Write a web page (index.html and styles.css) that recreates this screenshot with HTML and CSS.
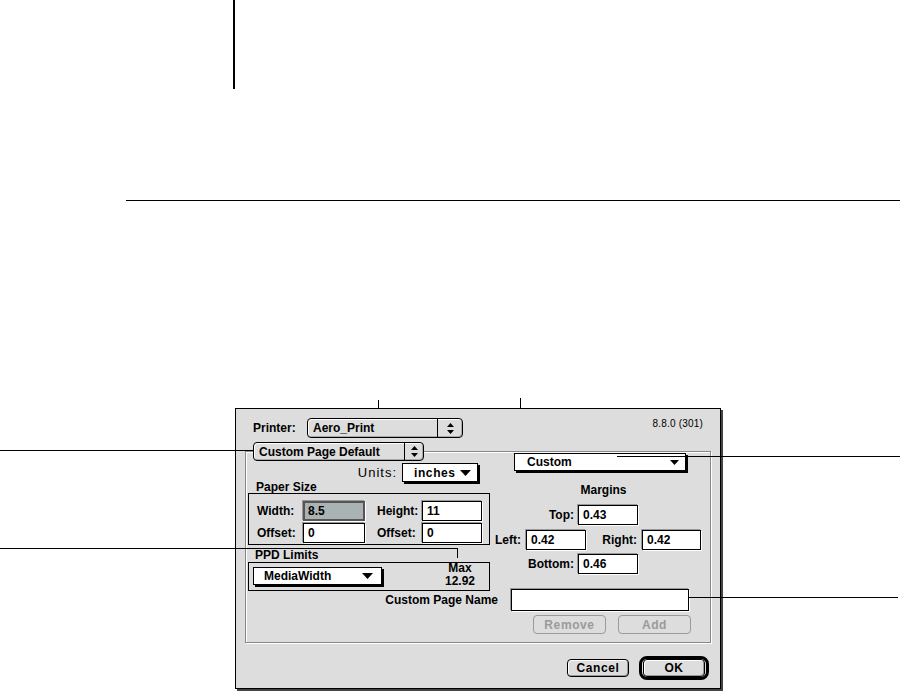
FILE: index.html
```html
<!DOCTYPE html>
<html lang="en">
<head>
  <meta charset="UTF-8" />
  <title>Custom Page Size</title>
  <link rel="stylesheet" href="styles.css">
</head>
<body>
  <div class="page">
    <div class="chapter-bar"></div>
    <div class="rule"></div>

    <div class="figure">
      <div class="dialog">
        <div class="dialog-top">
          <span class="label printer-label">Printer:</span>
          <div class="popup popup-gray printer-popup">
            <span class="popup-text">Aero_Print</span>
            <span class="popup-arrows">
              <svg width="7" height="11" viewBox="0 0 7 11"><polygon points="0,4 3.5,0 7,4" /><polygon points="0,7 7,7 3.5,11" /></svg>
            </span>
          </div>
          <span class="version">8.8.0 (301)</span>
        </div>

        <div class="group">
          <div class="popup popup-gray group-title">
            <span class="popup-text">Custom Page Default</span>
            <span class="popup-arrows">
              <svg width="7" height="11" viewBox="0 0 7 11"><polygon points="0,4 3.5,0 7,4" /><polygon points="0,7 7,7 3.5,11" /></svg>
            </span>
          </div>

          <div class="group-body">
            <div class="col-left">
              <div class="units-row">
                <span class="label-light">Units:</span>
                <div class="popup popup-white units-popup">
                  <span class="popup-text">inches</span>
                  <svg class="drop" width="11" height="6" viewBox="0 0 11 6"><polygon points="0,0 11,0 5.5,6" /></svg>
                </div>
              </div>

              <div class="box-title">Paper Size</div>
              <div class="box paper-box">
                <span class="label">Width:</span>
                <div class="field field-selected">8.5</div>
                <span class="label label-second">Height:</span>
                <div class="field">11</div>
                <span class="label">Offset:</span>
                <div class="field">0</div>
                <span class="label label-second">Offset:</span>
                <div class="field">0</div>
              </div>

              <div class="box-title ppd-title">PPD Limits</div>
              <div class="box ppd-box">
                <div class="popup popup-white media-popup">
                  <span class="popup-text">MediaWidth</span>
                  <svg class="drop" width="11" height="6" viewBox="0 0 11 6"><polygon points="0,0 11,0 5.5,6" /></svg>
                </div>
                <div class="limit">
                  <div>Max</div>
                  <div>12.92</div>
                </div>
              </div>
            </div>

            <div class="col-right">
              <div class="popup popup-white custom-popup">
                <span class="popup-text">Custom</span>
                <svg class="drop" width="9" height="5" viewBox="0 0 9 5"><polygon points="0,0 9,0 4.5,5" /></svg>
              </div>
              <div class="margins-title">Margins</div>
              <div class="margin-row margin-center">
                <span class="label margin-label">Top:</span>
                <div class="field margin-field">0.43</div>
              </div>
              <div class="margin-row margin-sides">
                <span class="label side-left">Left:</span>
                <div class="field margin-field">0.42</div>
                <span class="label side-right">Right:</span>
                <div class="field margin-field-right">0.42</div>
              </div>
              <div class="margin-row margin-center margin-last">
                <span class="label margin-label">Bottom:</span>
                <div class="field margin-field">0.46</div>
              </div>
            </div>
          </div>

          <div class="name-row">
            <span class="label">Custom Page Name</span>
            <div class="field name-field"></div>
          </div>
          <div class="btn-row">
            <button class="btn btn-disabled">Remove</button>
            <button class="btn btn-disabled">Add</button>
          </div>
        </div>

        <div class="dialog-actions">
          <button class="btn btn-cancel">Cancel</button>
          <div class="btn-ring">
            <button class="btn btn-ok">OK</button>
          </div>
        </div>
      </div>
    </div>

    <!-- leader lines pointing at the dialog items -->
    <div class="leader leader-title"></div>
    <div class="leader leader-ppd"></div>
    <div class="leader leader-ppd-drop"></div>
    <div class="leader leader-custom"></div>
    <div class="leader leader-name"></div>

    <!-- crop ticks above the figure -->
    <div class="tick tick-a"></div>
    <div class="tick tick-b"></div>
  </div>
</body>
</html>
```

FILE: styles.css
```css
:root {
  --negro: #000000;
  --platino: #dddddd;
  --gris: #888888;
  --gris-claro: #9a9a9a;
  --seleccion: #a9b3b3;
  --blanco: #ffffff;
}

body {
  margin: 0;
  background: var(--blanco);
  font-family: "Liberation Sans", Arial, sans-serif;
  color: var(--negro);
}

.page {
  position: relative;
  width: 900px;
  height: 694px;
  overflow: hidden;
}

.chapter-bar {
  width: 2px;
  height: 89px;
  margin-left: 233px;
  background: var(--negro);
}

.rule {
  height: 1px;
  margin: 111px 0 0 126px;
  background: var(--negro);
}

.figure {
  padding: 207px 0 0 235px;
}

/* dialog window */
.dialog {
  width: 484px;
  border: 1px solid var(--negro);
  background: var(--platino);
  box-shadow: 2px 2px 0 #444;
  font-size: 12px;
  font-weight: bold;
}

.dialog-top {
  display: flex;
  align-items: center;
  height: 20px;
  padding: 9px 17px 0 17px;
}

.printer-label {
  width: 54px;
}

.version {
  margin-left: auto;
  align-self: flex-start;
  margin-top: 0;
  font-size: 10px;
  font-weight: normal;
  letter-spacing: 0.2px;
}

.label {
  white-space: nowrap;
}

.label-light {
  font-size: 13px;
  font-weight: normal;
  letter-spacing: 1px;
  margin-right: 5px;
}

/* popup menus */
.popup {
  box-sizing: border-box;
  display: flex;
  align-items: center;
  border: 1px solid var(--negro);
  white-space: nowrap;
}

.popup-gray {
  height: 20px;
  border-radius: 4px;
  background: var(--platino);
  box-shadow: inset 1px 1px 0 var(--blanco), inset -1px -1px 0 #aaa;
}

.popup-gray .popup-text {
  flex: 1;
  padding-left: 5px;
}

.popup-arrows {
  display: flex;
  align-items: center;
  justify-content: center;
  align-self: stretch;
  border-left: 1px solid var(--negro);
}

.printer-popup {
  width: 156px;
}

.printer-popup .popup-arrows {
  width: 24px;
}

.group-title {
  position: absolute;
  top: -10px;
  left: 7px;
  width: 171px;
  height: 19px;
}

.group-title .popup-arrows {
  width: 18px;
}

.popup-white {
  height: 18px;
  background: var(--blanco);
  box-shadow: 2px 2px 0 var(--negro);
}

.popup-white .popup-text {
  flex: 1;
}

.drop {
  margin-right: 6px;
}

.units-popup {
  width: 76px;
  height: 19px;
  padding-left: 11px;
  letter-spacing: 0.6px;
}

.custom-popup {
  width: 172px;
  margin: 1px 0 0 22px;
  padding-left: 12px;
}

.media-popup {
  width: 129px;
  padding-left: 10px;
}

.media-popup .drop {
  margin-right: 8px;
}

/* group box */
.group {
  position: relative;
  margin: 13px 9px 0 9px;
  border: 1px solid var(--gris);
  box-shadow: 1px 1px 0 var(--blanco), inset 1px 1px 0 var(--blanco);
}

.group-body {
  display: grid;
  grid-template-columns: 246px 1fr;
}

.units-row {
  display: flex;
  align-items: center;
  justify-content: flex-end;
  margin-top: 11px;
  padding-right: 14px;
  height: 19px;
}

.box-title {
  height: 11px;
  line-height: 11px;
  padding-left: 10px;
}

.ppd-title {
  height: 13px;
  padding-top: 4px;
  line-height: 13px;
  padding-left: 9px;
}

.box {
  box-sizing: border-box;
  width: 242px;
  margin-left: 2px;
  border: 1px solid var(--negro);
}

.paper-box {
  height: 52px;
  display: grid;
  grid-template-columns: 54px 62px 57px 60px;
  grid-auto-rows: 20px;
  row-gap: 2px;
  align-items: center;
  padding-top: 7px;
}

.paper-box .label {
  padding-left: 8px;
}

.paper-box .label-second {
  padding-left: 12px;
}

/* edit text fields */
.field {
  box-sizing: border-box;
  height: 20px;
  border: 1px solid var(--negro);
  background: var(--blanco);
  box-shadow: -1px -1px 0 #999, 1px 1px 0 var(--blanco);
  padding-left: 4px;
  line-height: 18px;
}

.field-selected {
  border: 2px solid #555;
  padding-left: 3px;
  line-height: 16px;
  background: var(--seleccion);
}

.ppd-box {
  height: 29px;
  display: flex;
  align-items: flex-start;
  padding: 4px 10px 0 4px;
}

.limit {
  margin: -5px 0 0 auto;
  width: 38px;
  text-align: center;
  line-height: 13px;
}

.margins-title {
  margin: 13px 0 9px 0;
  padding-left: 5px;
  line-height: 12px;
  text-align: center;
}

.margin-row {
  display: flex;
  align-items: center;
  height: 20px;
}

.margin-row + .margin-row {
  margin-top: 5px;
}

.margin-row.margin-last {
  margin-top: 4px;
}

.margin-center {
  padding-left: 32px;
}

.margin-label {
  width: 50px;
  margin-right: 4px;
  text-align: right;
}

.margin-field {
  width: 60px;
}

.margin-field-right {
  width: 59px;
}

.margin-sides {
  padding-left: 3px;
}

.side-left {
  width: 31px;
}

.side-right {
  width: 51px;
  padding-right: 5px;
  text-align: right;
}

.name-row {
  display: flex;
  align-items: center;
  justify-content: flex-end;
  margin-top: -2px;
  padding-right: 21px;
}

.name-row .label {
  margin-right: 13px;
}

.name-field {
  width: 178px;
  height: 22px;
}

.btn-row {
  display: flex;
  justify-content: flex-end;
  gap: 12px;
  margin: 4px 0 8px 0;
  padding-right: 19px;
}

/* push buttons */
.btn {
  box-sizing: border-box;
  height: 19px;
  padding: 0;
  border: 1px solid var(--negro);
  border-radius: 4px;
  background: var(--platino);
  box-shadow: inset 1px 1px 0 var(--blanco), inset -1px -1px 0 #999;
  font-family: "Liberation Sans", Arial, sans-serif;
  font-size: 12px;
  font-weight: bold;
  letter-spacing: 0.6px;
  color: var(--negro);
}

.btn-disabled {
  width: 73px;
  border-color: var(--gris-claro);
  color: var(--gris-claro);
  box-shadow: none;
}

.dialog-actions {
  display: flex;
  align-items: center;
  justify-content: flex-end;
  gap: 10px;
  margin-top: 13px;
  padding: 0 11px 8px 0;
}

.btn-cancel {
  width: 62px;
  height: 18px;
}

.btn-ring {
  box-sizing: border-box;
  width: 70px;
  height: 24px;
  padding: 0;
  border: 3px solid var(--negro);
  border-radius: 8px;
  display: flex;
  align-items: center;
  justify-content: center;
}

.btn-ok {
  width: 62px;
  height: 18px;
}

/* leaders and ticks */
.leader {
  position: absolute;
  background: var(--negro);
}

.leader-title {
  left: 0;
  top: 450px;
  width: 253px;
  height: 1px;
}

.leader-ppd {
  left: 0;
  top: 548px;
  width: 458px;
  height: 1px;
}

.leader-ppd-drop {
  left: 457px;
  top: 548px;
  width: 1px;
  height: 10px;
}

.leader-custom {
  left: 617px;
  top: 456px;
  width: 283px;
  height: 1px;
}

.leader-name {
  left: 688px;
  top: 597px;
  width: 210px;
  height: 1px;
}

.tick {
  position: absolute;
  width: 1px;
  background: var(--negro);
}

.tick-a {
  left: 378px;
  top: 400px;
  height: 8px;
}

.tick-b {
  left: 520px;
  top: 398px;
  height: 10px;
}
```
